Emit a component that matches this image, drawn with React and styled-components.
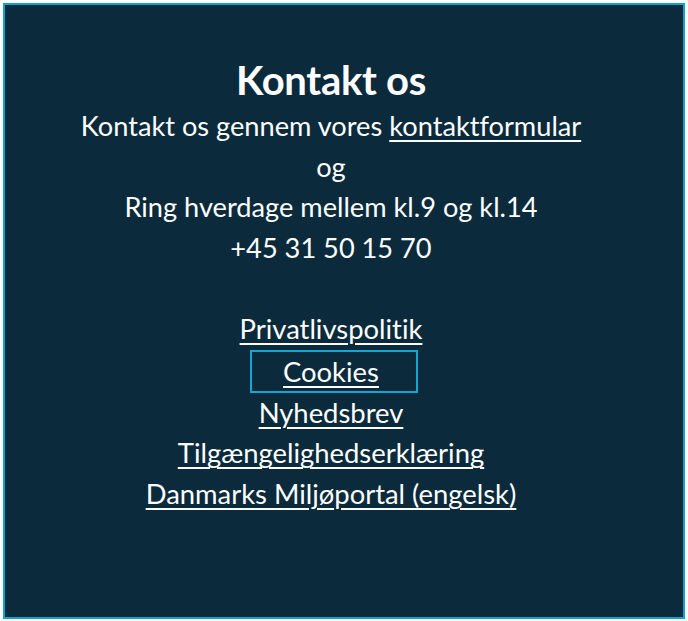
import styled, { createGlobalStyle } from 'styled-components';

const GlobalStyle = createGlobalStyle`
  html, body {
    margin: 0;
    padding: 0;
    background: #ffffff;
  }
  body {
    font-family: Lato, "Open Sans", sans-serif;
    font-variant-ligatures: none;
  }
`;

const Page = styled.div`
  padding: 3px 3px 2px 3px;
`;

const Footer = styled.footer`
  box-sizing: border-box;
  height: 616px;
  border: 2px solid #0ea3cf;
  background: #0b2b3c;
  color: #ffffff;
  display: flex;
  flex-direction: column;
  align-items: center;
  padding: 51px 26px 0 0;
  text-align: center;
`;

const Title = styled.h2`
  margin: 0 0 2px;
  font-size: 40px;
  font-weight: 700;
  line-height: 48px;
  letter-spacing: -0.3px;
`;

const Line = styled.p`
  margin: 0;
  font-size: 27.2px;
  line-height: 40.5px;
`;

const Link = styled.a`
  color: #ffffff;
  text-decoration: underline;
  text-underline-offset: 4px;
  text-decoration-thickness: 2px;
`;

const LinkList = styled.ul`
  list-style: none;
  margin: 41px 0 0;
  padding: 0;
  display: flex;
  flex-direction: column;
  align-items: center;
`;

const LinkItem = styled.li`
  font-size: 27.4px;
  line-height: 40.7px;
`;

const FocusBox = styled.span`
  display: inline-block;
  box-sizing: border-box;
  width: 168px;
  height: 43px;
  line-height: 39px;
  margin-left: 6px;
  padding-right: 6px;
  border: 2px solid #14a6d2;
`;

const links = [
  'Privatlivspolitik',
  'Cookies',
  'Nyhedsbrev',
  'Tilgængelighedserklæring',
  'Danmarks Miljøportal (engelsk)',
];

export default function App() {
  return (
    <Page>
      <GlobalStyle />
      <Footer>
        <Title>Kontakt os</Title>
        <Line>
          Kontakt os gennem vores <Link href="#">kontaktformular</Link>
        </Line>
        <Line>og</Line>
        <Line>Ring hverdage mellem kl.9 og kl.14</Line>
        <Line>+45 31 50 15 70</Line>
        <LinkList>
          {links.map((l) => (
            <LinkItem key={l}>
              {l === 'Cookies' ? (
                <FocusBox>
                  <Link href="#">{l}</Link>
                </FocusBox>
              ) : (
                <Link href="#">{l}</Link>
              )}
            </LinkItem>
          ))}
        </LinkList>
      </Footer>
    </Page>
  );
}
